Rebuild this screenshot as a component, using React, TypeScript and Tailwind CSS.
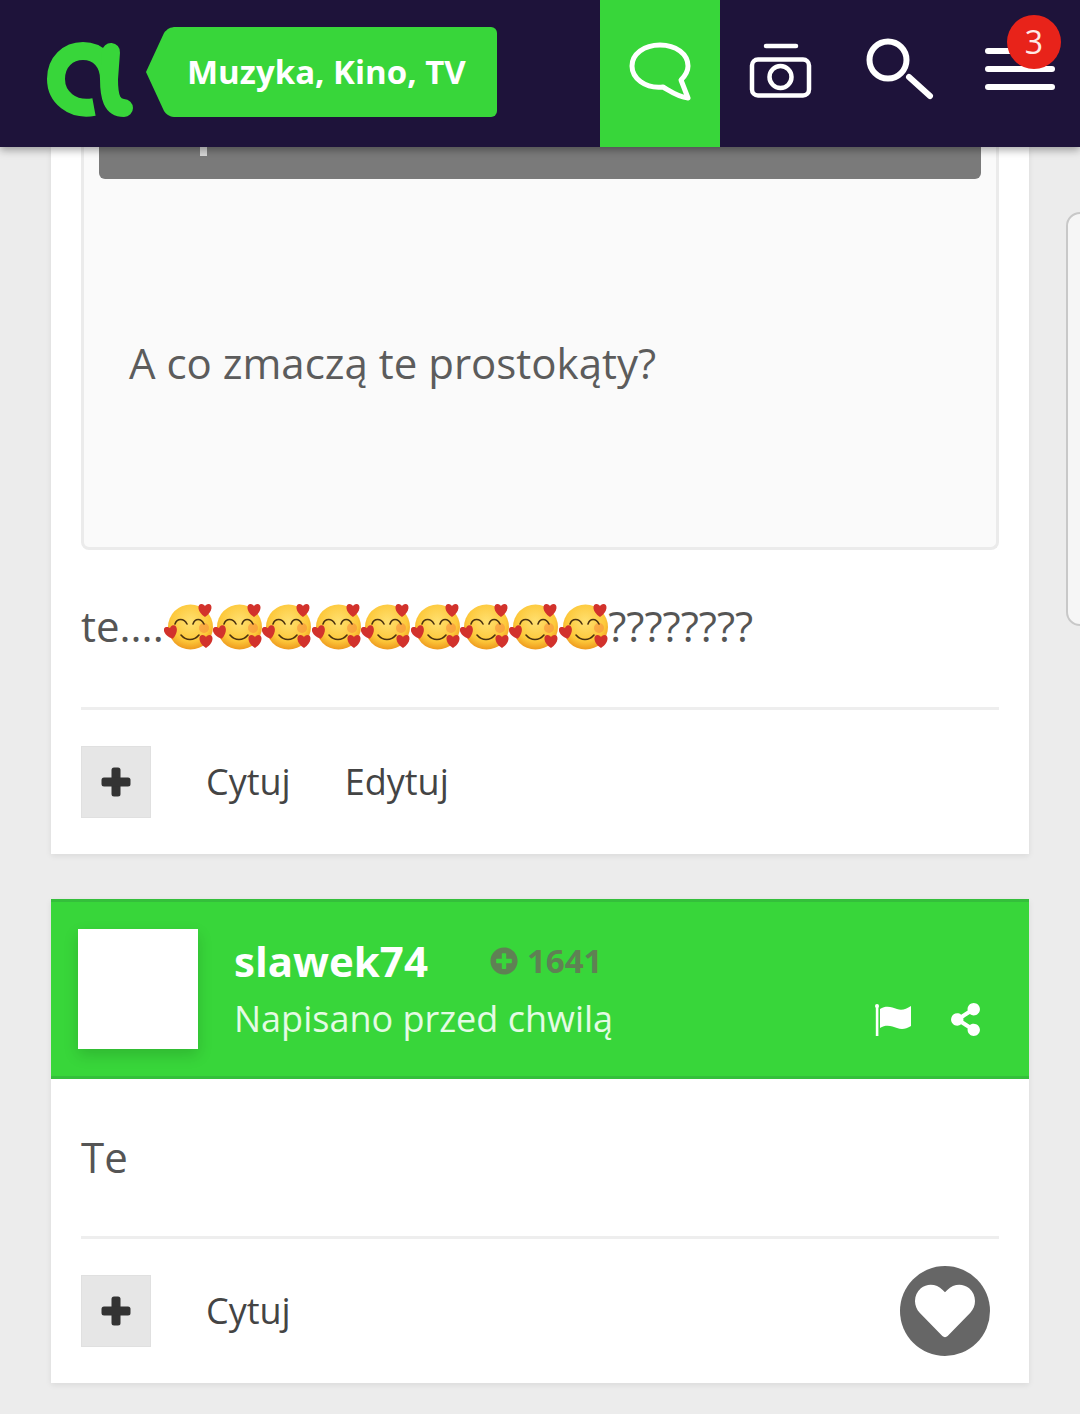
// forum thread screen
import { FaHeart, FaPlusCircle, FaShareAlt } from 'react-icons/fa';

function Logo() {
    return (
        <svg width="88" height="76" viewBox="46 41 88 76" fill="none" stroke="#38d63a" strokeWidth="18" className="mt-3">
            <path d="M94 106C72 110 56 96 56 78C56 61 68 50 83 50C99 50 109 62 109 78" />
            <path d="M111 51L109 78C109 96 112 107 124 107" strokeLinecap="round" />
        </svg>
    );
}

function CategoryTag() {
    return (
        <div className="flex h-[90px] ml-3 -mt-[3px]">
            <svg width="30" height="90" viewBox="0 0 30 90" className="shrink-0 -mr-px">
                <path d="M30 0C24 0 21 2 18 6L0 45L18 84C21 88 24 90 30 90Z" fill="#38d63a" />
            </svg>
            <div className="w-[322px] bg-[#38d63a] rounded-r-md flex items-center pl-3">
                <span className="text-white font-bold text-[33px] font-['Open_Sans',sans-serif]">Muzyka, Kino, TV</span>
            </div>
        </div>
    );
}

function Header() {
    return (
        <header className="relative z-10 h-[147px] shrink-0 bg-[#1e133a] flex items-center pl-[46px] shadow-[0_3px_8px_rgba(0,0,0,0.35)]">
            <Logo />
            <CategoryTag />
            <div className="ml-auto flex h-full">
                <div className="w-[120px] bg-[#38d63a]">
                    <svg width="120" height="147" viewBox="600 0 120 147" fill="none" stroke="white" strokeWidth="5" strokeLinejoin="round">
                        <path d="M660 45C676 45 688 54 688 66C688 72 685 76 681 80L688 98C678 97 670 91 663 87C645 89 632 78 632 66C632 54 644 45 660 45Z" />
                    </svg>
                </div>
                <div className="w-[120px]">
                    <svg width="120" height="147" viewBox="720 0 120 147" fill="none" stroke="white" strokeWidth="4.5">
                        <path d="M766 46H796" strokeLinecap="round" />
                        <rect x="752" y="59.5" width="57" height="36" rx="6" />
                        <circle cx="780.5" cy="77" r="11" />
                    </svg>
                </div>
                <div className="w-[120px]">
                    <svg width="120" height="147" viewBox="840 0 120 147" fill="none" stroke="white">
                        <circle cx="888" cy="60" r="18.5" strokeWidth="6" />
                        <path d="M909 77L930 96" strokeWidth="6" strokeLinecap="round" />
                    </svg>
                </div>
                <div className="relative w-[120px] pl-[25px] pt-[48px] flex flex-col gap-3">
                    <div className="w-[70px] h-[6px] rounded-full bg-white" />
                    <div className="w-[70px] h-[6px] rounded-full bg-white" />
                    <div className="w-[70px] h-[6px] rounded-full bg-white" />
                    <div className="absolute left-[47px] top-[15px] w-[54px] h-[54px] rounded-full bg-[#e8231a] text-[#ffe9e6] flex items-center justify-center text-[32px] font-['Open_Sans',sans-serif]">
                        3
                    </div>
                </div>
            </div>
        </header>
    );
}

const heart = 'M0 7C-8 2 -8 -6 -3.5 -6C-1.8 -6 -0.6 -5 0 -3.8C0.6 -5 1.8 -6 3.5 -6C8 -6 8 2 0 7Z';

function HeartEmoji() {
    return (
        <svg width="49.4" height="50" viewBox="0 0 49.4 50" className="shrink-0">
            <defs>
                <radialGradient id="face" cx="50%" cy="38%" r="62%">
                    <stop offset="0%" stopColor="#ffe070" />
                    <stop offset="70%" stopColor="#fdc83a" />
                    <stop offset="100%" stopColor="#ee9a1e" />
                </radialGradient>
            </defs>
            <circle cx="26.5" cy="26" r="22.5" fill="url(#face)" />
            <circle cx="40" cy="27" r="5" fill="#f58a3c" opacity="0.55" />
            <g fill="none" stroke="#4a3210" strokeWidth="1.6" strokeLinecap="round">
                <path d="M11 23C13 17 20 17 23 23" />
                <path d="M29 23C31 17 37 17 40 23" />
                <path d="M17 34C22 40 30 40 35 34" />
            </g>
            <g fill="#d2322c">
                <path d={heart} transform="translate(41 9)" />
                <path d={heart} transform="translate(42 40)" />
                <path d={heart} transform="translate(7 31) rotate(-15)" />
            </g>
        </svg>
    );
}

function PlusIcon() {
    return (
        <svg width="30" height="30" viewBox="0 0 30 30" fill="#333333">
            <rect x="10.5" y="0.5" width="9" height="29" rx="2.5" />
            <rect x="0.5" y="10.5" width="29" height="9" rx="2.5" />
        </svg>
    );
}

function FlagIcon() {
    return (
        <svg width="36" height="32" viewBox="0 0 36 32" fill="white">
            <circle cx="2" cy="2" r="2" />
            <rect x="0.8" y="2" width="2.6" height="30" />
            <path d="M5 5C11 1 17 3 22 5C27 7 31 5 36 2V22C31 25 27 26 22 24C17 22 11 20 5 24Z" />
        </svg>
    );
}

function PostActions({ edit, like }: { edit?: boolean; like?: boolean }) {
    return (
        <div className="relative border-t-[3px] border-[#eeeeee] pt-[36px] pb-[36px] flex items-center">
            <div className="w-[70px] h-[72px] bg-[#e6e6e6] border border-[#e0e0e0] flex items-center justify-center">
                <PlusIcon />
            </div>
            <span className="ml-[55px] text-[36px] text-[#444444]">Cytuj</span>
            {edit && <span className="ml-[54px] text-[36px] text-[#444444]">Edytuj</span>}
            {like && (
                <div className="absolute right-[9px] top-[27px] w-[90px] h-[90px] rounded-full bg-[#666666] flex items-center justify-center text-white">
                    <FaHeart size={60} />
                </div>
            )}
        </div>
    );
}

export default function App() {
    return (
        <div className="relative w-[1080px] h-[1414px] overflow-hidden bg-[#ececec] flex flex-col font-['Open_Sans',sans-serif]">
            <Header />

            <div className="absolute left-[1066px] top-[212px] w-[40px] h-[414px] rounded-[14px] border-2 border-[#c8c8c8] bg-[#f6f6f6]" />

            <section className="mx-[51px] bg-white px-[30px] shadow-[0_2px_6px_rgba(0,0,0,0.08)]">
                <div className="h-[403px] bg-[#fafafa] border-[3px] border-t-0 border-[#ebebeb] rounded-b-lg px-[15px] flex flex-col">
                    <div className="h-[32px] shrink-0 bg-[#7a7a7a] rounded-b-md pl-[101px]">
                        <div className="w-[7px] h-[9px] bg-[#d8d8d8]" />
                    </div>
                    <p className="mt-[156px] ml-[30px] text-[42px] leading-[56px] text-[#5c5c5c]">A co zmaczą te prostokąty?</p>
                </div>
                <div className="h-[157px] flex items-center text-[42px] text-[#555555] pb-[6px]">
                    <span>te....</span>
                    {Array.from({ length: 9 }).map((_, i) => (
                        <HeartEmoji key={i} />
                    ))}
                    <span>????????</span>
                </div>
                <PostActions edit />
            </section>

            <section className="mx-[51px] mt-[45px] bg-white shadow-[0_2px_6px_rgba(0,0,0,0.08)]">
                <div className="relative h-[180px] bg-[#38d63a] border-y-[3px] border-[#34bf3b] pl-[27px] pt-[27px] flex">
                    <div className="w-[120px] h-[120px] bg-white shadow-[0_6px_14px_rgba(0,0,0,0.15)]" />
                    <div className="ml-9 flex flex-col">
                        <div className="flex items-center h-[62px]">
                            <span className="text-white font-bold text-[42px]">slawek74</span>
                            <span className="ml-[62px] mt-[2px] flex items-center gap-[9px] text-[#5f8154] font-bold text-[33px]">
                                <FaPlusCircle size={28} />
                                1641
                            </span>
                        </div>
                        <span className="mt-[3px] text-[36px] leading-[50px] text-[#e4fbe4]">Napisano przed chwilą</span>
                    </div>
                    <div className="absolute right-[47px] top-[101px] flex items-center gap-[38px] text-white">
                        <FlagIcon />
                        <FaShareAlt size={33} />
                    </div>
                </div>
                <div className="px-[30px]">
                    <div className="h-[157px] flex items-center text-[42px] text-[#555555] pb-[2px]">Te</div>
                    <PostActions like />
                </div>
            </section>
        </div>
    );
}
